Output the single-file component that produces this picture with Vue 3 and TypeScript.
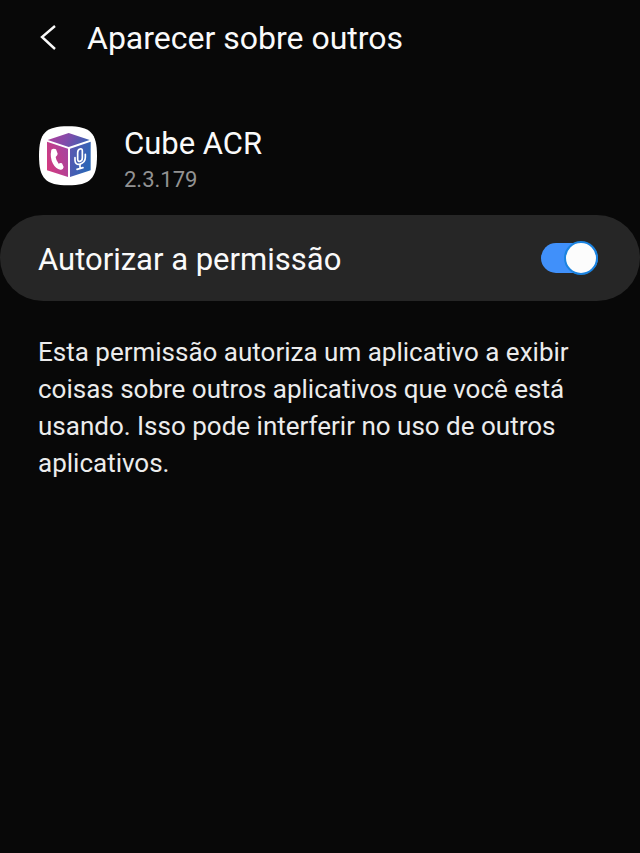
<script setup lang="ts">
import { ref } from 'vue'

const allowed = ref<boolean>(true)
</script>

<template>
  <main class="screen">
    <header class="bar">
      <button class="back" type="button" aria-label="Voltar">
        <svg viewBox="0 0 20 28" width="20" height="28" aria-hidden="true">
          <path d="M16 2 L3 13 L16 25" fill="none" stroke="currentColor" stroke-width="2.4" />
        </svg>
      </button>
      <h1 class="title">Aparecer sobre outros</h1>
    </header>

    <section class="app">
      <svg class="logo" viewBox="0 0 180 180" width="60" height="60" aria-hidden="true">
        <defs>
          <linearGradient id="top" x1="0" y1="0.2" x2="1" y2="0.4">
            <stop offset="0" stop-color="#b03d9a" />
            <stop offset="0.5" stop-color="#804cab" />
            <stop offset="1" stop-color="#3a62b2" />
          </linearGradient>
          <linearGradient id="left" x1="0" y1="0.7" x2="1" y2="0.1">
            <stop offset="0" stop-color="#d23a80" />
            <stop offset="1" stop-color="#a346a2" />
          </linearGradient>
          <linearGradient id="right" x1="0" y1="0" x2="1" y2="0.5">
            <stop offset="0" stop-color="#6056b0" />
            <stop offset="1" stop-color="#2a66b6" />
          </linearGradient>
        </defs>
        <path
          d="M90 1 C157 1 177 21 177 89 C177 157 157 178 90 178 C23 178 3 157 3 89 C3 21 23 1 90 1 Z"
          fill="#fff"
        />
        <path d="M92 21 L155 42 L92 63 L29 42 Z" fill="url(#top)" />
        <path d="M27 47 L90 68 V153 L27 133 Z" fill="url(#left)" />
        <path d="M96 68 L158 47 V133 L96 153 Z" fill="url(#right)" />
        <path
          d="M40 71 Q47 66 54 70 L59 83 Q59 87 53 93 Q54 104 62 113 Q67 109 72 112 L77 123 Q75 133 67 131 Q53 128 45 113 Q35 94 40 71 Z"
          fill="#fff"
        />
        <g fill="none" stroke="#fff" stroke-width="5" stroke-linecap="round">
          <path d="M119 80 Q119 71 126 69 Q133 67 133 75 V96 Q133 104 126 106 Q119 107 119 100 Z" />
          <path d="M111 95 V103 Q112 117 125 115 Q142 110 142 94 V85" />
          <path d="M126 116 V128 M117 130 L135 125" />
        </g>
      </svg>
      <div class="about">
        <h2 class="name">Cube ACR</h2>
        <p class="version">2.3.179</p>
      </div>
    </section>

    <label class="permission">
      <span class="label">Autorizar a permissão</span>
      <input v-model="allowed" class="switch" type="checkbox" role="switch" />
    </label>

    <p class="note">
      Esta permissão autoriza um aplicativo a exibir coisas sobre outros aplicativos que você está
      usando. Isso pode interferir no uso de outros aplicativos.
    </p>
  </main>
</template>

<style>
body {
  margin: 0;
  background: #080808;
}
</style>

<style scoped>
.screen {
  min-height: 100vh;
  box-sizing: border-box;
  background: #080808;
  color: #fafafa;
  font-family: Roboto, 'Liberation Sans', sans-serif;
}

h1,
h2,
p {
  margin: 0;
  font-weight: 400;
}

.bar {
  display: flex;
  align-items: center;
  gap: 28px;
  padding: 18px 39px;
}

.back {
  display: flex;
  padding: 0;
  border: 0;
  background: none;
  color: inherit;
  cursor: pointer;
}

.title {
  font-size: 32px;
  line-height: 40px;
}

.app {
  display: flex;
  align-items: flex-start;
  gap: 26px;
  padding: 48px 38px 20px;
}

.logo {
  flex: none;
  margin-top: 2px;
}

.name {
  font-size: 31px;
  line-height: 40px;
}

.version {
  color: #929292;
  font-size: 22px;
  line-height: 31px;
}

.permission {
  display: flex;
  align-items: center;
  justify-content: space-between;
  gap: 24px;
  padding: 22px 42px 22px 38px;
  border-radius: 43px;
  background: #262626;
  cursor: pointer;
}

.label {
  padding-top: 4px;
  font-size: 31px;
  line-height: 38px;
}

.switch {
  display: flex;
  align-items: center;
  justify-content: flex-end;
  flex: none;
  width: 57px;
  height: 30px;
  margin: 0;
  border-radius: 15px;
  background: #6b6b6b;
  appearance: none;
  cursor: pointer;
}

.switch::before {
  content: '';
  box-sizing: border-box;
  flex: none;
  width: 34px;
  height: 34px;
  border: 2px solid #6b6b6b;
  border-radius: 50%;
  background: #fcfcfc;
}

.switch:not(:checked) {
  justify-content: flex-start;
}

.switch:checked {
  background: #4090fa;
}

.switch:checked::before {
  border-color: #1b83e0;
}

.note {
  padding: 33px 64px 32px 38px;
  color: #ececec;
  font-size: 26px;
  line-height: 37px;
}
</style>
